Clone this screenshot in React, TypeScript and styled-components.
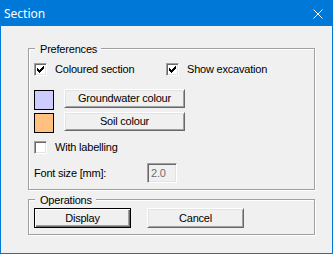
import React from "react";
import styled, { createGlobalStyle } from "styled-components";

const GlobalStyle = createGlobalStyle`
  html, body { margin: 0; padding: 0; background: #ffffff; }
  body { font-family: "Liberation Sans", Arial, sans-serif; }
`;

const Window = styled.div`
  width: 333px;
  height: 254px;
  box-sizing: border-box;
  border: 1px solid #0078d7;
  display: flex;
  flex-direction: column;
  background: #f0f0f0;
`;

const TitleBar = styled.div`
  height: 25px;
  flex: none;
  background: #0078d7;
  display: flex;
  align-items: center;
  justify-content: space-between;
`;

const Title = styled.span`
  color: #ffffff;
  font-family: "Noto Sans", "Open Sans", sans-serif;
  font-size: 12px;
  line-height: 16px;
  padding-left: 3px;
  margin-top: 1px;
`;

const CloseBox = styled.div`
  width: 10px;
  height: 10px;
  margin-right: 9px;
  margin-top: 1px;
  display: flex;
`;

const Client = styled.div`
  flex: 1;
  padding: 22px 0 0 27px;
  font-size: 11px;
  letter-spacing: -0.2px;
  color: #000000;
`;

const Group = styled.div<{ $height: number; $top?: number; $padTop: number }>`
  position: relative;
  box-sizing: border-box;
  width: 287px;
  height: ${(p) => p.$height}px;
  margin-top: ${(p) => p.$top ?? 0}px;
  border: 1px solid #a0a0a0;
  box-shadow: inset 1px 1px 0 #ffffff, 1px 1px 0 #ffffff;
  padding: ${(p) => p.$padTop}px 0 0 5px;
  display: flex;
  flex-direction: column;
`;

const Legend = styled.span`
  position: absolute;
  left: 6px;
  top: -6px;
  padding: 0 4px 0 5px;
  background: #f0f0f0;
  line-height: 13px;
`;

const Row = styled.div<{ $top?: number; $height: number }>`
  display: flex;
  align-items: center;
  height: ${(p) => p.$height}px;
  margin-top: ${(p) => p.$top ?? 0}px;
`;

const SwatchRowBox = styled.div<{ $top?: number }>`
  display: flex;
  align-items: flex-start;
  height: 20px;
  margin-top: ${(p) => p.$top ?? 0}px;
`;

const CheckItem = styled.label<{ $width?: number }>`
  display: flex;
  align-items: center;
  width: ${(p) => (p.$width ? `${p.$width}px` : "auto")};
  line-height: 13px;
`;

const CheckBox = styled.span`
  width: 13px;
  height: 13px;
  box-sizing: border-box;
  flex: none;
  background: #ffffff;
  border-top: 1px solid #a0a0a0;
  border-left: 1px solid #a0a0a0;
  border-right: 1px solid #ffffff;
  border-bottom: 1px solid #ffffff;
  box-shadow: inset 1px 1px 0 #696969, inset -1px -1px 0 #e3e3e3;
  display: flex;
  align-items: center;
  justify-content: center;
`;

const CheckLabel = styled.span`
  margin-left: 8px;
`;

const Swatch = styled.span<{ $color: string }>`
  width: 20px;
  height: 20px;
  box-sizing: border-box;
  margin-top: 1px;
  border: 1px solid #000000;
  background: ${(p) => p.$color};
  flex: none;
`;

const Button = styled.button<{ $width: number; $height: number; $default?: boolean; $left?: number }>`
  box-sizing: border-box;
  width: ${(p) => p.$width}px;
  height: ${(p) => p.$height}px;
  margin: 0 0 0 ${(p) => p.$left ?? 0}px;
  padding: 0;
  font-family: "Liberation Sans", Arial, sans-serif;
  font-size: 11px;
  letter-spacing: -0.2px;
  color: #000000;
  background: #f0f0f0;
  border: 1px solid;
  border-color: ${(p) => (p.$default ? "#000000" : "#ffffff #696969 #696969 #ffffff")};
  box-shadow: ${(p) =>
    p.$default
      ? "inset 1px 1px 0 #ffffff, inset -1px -1px 0 #696969, inset -2px -2px 0 #a0a0a0"
      : "inset 1px 1px 0 #e3e3e3, inset -1px -1px 0 #a0a0a0"};
  display: flex;
  align-items: center;
  justify-content: center;
  line-height: 13px;
`;

const FieldLabel = styled.span`
  width: 113px;
  flex: none;
  line-height: 13px;
`;

const DisabledInput = styled.div`
  width: 30px;
  height: 20px;
  box-sizing: border-box;
  background: #f0f0f0;
  border-top: 1px solid #a0a0a0;
  border-left: 1px solid #a0a0a0;
  border-right: 1px solid #ffffff;
  border-bottom: 1px solid #ffffff;
  box-shadow: inset 1px 1px 0 #696969, inset -1px -1px 0 #e3e3e3;
  color: #6d6d6d;
  padding: 0 0 0 3px;
  display: flex;
  align-items: center;
  line-height: 13px;
`;

const CheckMark = () => (
  <svg width="7" height="7" viewBox="0 0 7 7" shapeRendering="crispEdges">
    {[2, 3, 4, 3, 2, 1, 0].map((y, x) => (
      <rect key={x} x={x} y={y} width="1" height="3" fill="#000" />
    ))}
  </svg>
);

const CloseIcon = () => (
  <svg width="10" height="10" viewBox="0 0 10 10">
    <path d="M0.5 0.5 L9.5 9.5 M9.5 0.5 L0.5 9.5" stroke="#ffffff" strokeWidth="1" fill="none" />
  </svg>
);

const Check = ({ label, checked, width }: { label: string; checked: boolean; width?: number }) => (
  <CheckItem $width={width}>
    <CheckBox>{checked && <CheckMark />}</CheckBox>
    <CheckLabel>{label}</CheckLabel>
  </CheckItem>
);

export default function App() {
  return (
    <>
      <GlobalStyle />
      <Window>
        <TitleBar>
          <Title>Section</Title>
          <CloseBox>
            <CloseIcon />
          </CloseBox>
        </TitleBar>
        <Client>
          <Group $height={142} $padTop={14}>
            <Legend>Preferences</Legend>
            <Row $height={13}>
              <Check label="Coloured section" checked width={132} />
              <Check label="Show excavation" checked />
            </Row>
            <SwatchRowBox $top={13}>
              <Swatch $color="#ccccff" />
              <Button $width={121} $height={19} $left={10}>
                Groundwater colour
              </Button>
            </SwatchRowBox>
            <SwatchRowBox $top={3}>
              <Swatch $color="#ffc080" />
              <Button $width={121} $height={19} $left={10}>
                Soil colour
              </Button>
            </SwatchRowBox>
            <Row $height={13} $top={9}>
              <Check label="With labelling" checked={false} />
            </Row>
            <Row $height={20} $top={9}>
              <FieldLabel>Font size [mm]:</FieldLabel>
              <DisabledInput>2.0</DisabledInput>
            </Row>
          </Group>
          <Group $height={36} $top={9} $padTop={8}>
            <Legend>Operations</Legend>
            <Row $height={20}>
              <Button $width={97} $height={20} $default>
                Display
              </Button>
              <Button $width={97} $height={20} $left={16}>
                Cancel
              </Button>
            </Row>
          </Group>
        </Client>
      </Window>
    </>
  );
}
